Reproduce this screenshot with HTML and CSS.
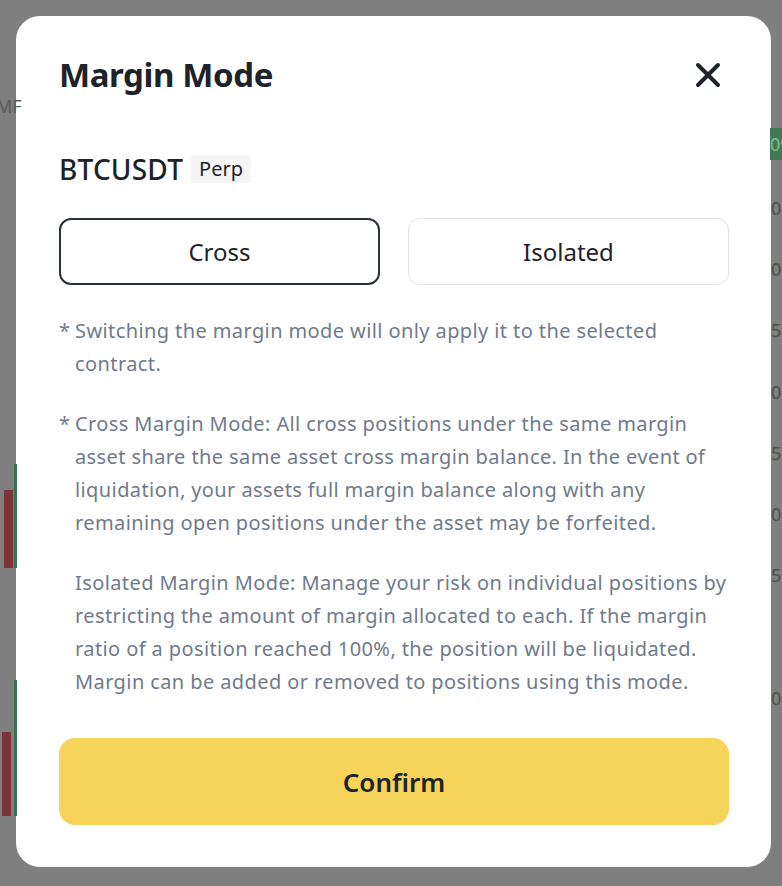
FILE: index.html
```html
<!DOCTYPE html>
<html lang="en">
<head>
<meta charset="utf-8">
<title>Margin Mode</title>
<link rel="stylesheet" href="styles.css">
</head>
<body>
<div class="backdrop">
  <div class="bg-label bg-mf">MF</div>
  <div class="bg-tag">09</div>
  <div class="bg-price" style="top:196px">05</div>
  <div class="bg-price" style="top:257px">00</div>
  <div class="bg-price" style="top:318px">50</div>
  <div class="bg-price" style="top:380px">00</div>
  <div class="bg-price" style="top:441px">50</div>
  <div class="bg-price" style="top:502px">00</div>
  <div class="bg-price" style="top:563px">50</div>
  <div class="bg-price" style="top:686px">00</div>
  <div class="bg-candle red" style="top:490px;height:78px;left:4px"></div>
  <div class="bg-candle green" style="top:464px;height:104px;left:14px"></div>
  <div class="bg-candle red" style="top:732px;height:84px;left:2px"></div>
  <div class="bg-candle green" style="top:680px;height:136px;left:14px"></div>

  <div class="modal">
    <div class="modal-header">
      <h1 class="modal-title">Margin Mode</h1>
      <button class="close-btn" aria-label="Close">
        <svg width="28" height="28" viewBox="0 0 28 28"><path d="M4 4 L24 24 M24 4 L4 24" stroke="#1e2329" stroke-width="4" stroke-linecap="round"/></svg>
      </button>
    </div>

    <div class="symbol-row">
      <span class="symbol">BTCUSDT</span>
      <span class="badge">Perp</span>
    </div>

    <div class="mode-options">
      <button class="mode-btn active">Cross</button>
      <button class="mode-btn">Isolated</button>
    </div>

    <div class="notes">
      <div class="note"><span class="star">*</span><p>Switching the margin mode will only apply it to the selected contract.</p></div>
      <div class="note"><span class="star">*</span><p>Cross Margin Mode: All cross positions under the same margin asset share the same asset cross margin balance. In the event of liquidation, your assets full margin balance along with any remaining open positions under the asset may be forfeited.</p></div>
      <div class="note"><span class="star"></span><p>Isolated Margin Mode: Manage your risk on individual positions by restricting the amount of margin allocated to each. If the margin ratio of a position reached 100%, the position will be liquidated. Margin can be added or removed to positions using this mode.</p></div>
    </div>

    <button class="confirm-btn">Confirm</button>
  </div>
</div>
</body>
</html>
```

FILE: styles.css
```css
* { box-sizing: border-box; }
html, body { margin: 0; padding: 0; }
body {
  width: 782px;
  height: 886px;
  overflow: hidden;
  font-family: "Noto Sans", "Liberation Sans", sans-serif;
  background: #7f7f7f;
}
.backdrop {
  position: relative;
  width: 782px;
  height: 886px;
  padding: 16px 11px 19px 16px;
  background: #7f7f7f;
}
.bg-label {
  position: absolute;
  left: -4px;
  top: 94px;
  color: #5a5a5a;
  font-size: 18px;
}
.bg-tag {
  position: absolute;
  right: 0;
  top: 128px;
  width: 12px;
  height: 32px;
  background: #3f7a55;
  color: #8ab79a;
  font-size: 18px;
  line-height: 32px;
  overflow: hidden;
}
.bg-price {
  position: absolute;
  right: -3px;
  width: 14px;
  color: #4d4d4d;
  font-size: 18px;
  overflow: hidden;
  white-space: nowrap;
}
.bg-candle {
  position: absolute;
  width: 9px;
}
.bg-candle.red { background: #7c3336; }
.bg-candle.green { background: #3c6e50; width: 3px; }

.modal {
  width: 755px;
  height: 851px;
  background: #ffffff;
  border-radius: 24px;
  padding: 40px 42px 42px 43px;
  display: flex;
  flex-direction: column;
}
.modal-header {
  display: flex;
  justify-content: space-between;
  align-items: center;
  height: 38px;
}
.modal-title {
  margin: 0;
  font-size: 33px;
  font-weight: 700;
  color: #1e2329;
  line-height: 38px;
  letter-spacing: -0.4px;
}
.close-btn {
  border: 0;
  background: none;
  padding: 0;
  margin-right: 7px;
  width: 28px;
  height: 28px;
  display: flex;
}
.symbol-row {
  display: flex;
  align-items: center;
  gap: 8px;
  margin-top: 59px;
  height: 32px;
}
.symbol {
  font-size: 28px;
  font-weight: 500;
  color: #1e2329;
  letter-spacing: 0.2px;
}
.badge {
  background: #f5f5f5;
  color: #1e2329;
  font-size: 20px;
  padding: 0 8px;
  height: 28px;
  line-height: 28px;
  border-radius: 3px;
}
.mode-options {
  display: grid;
  grid-template-columns: 1fr 1fr;
  gap: 28px;
  margin-top: 33px;
}
.mode-btn {
  height: 67px;
  background: #fff;
  border: 1px solid #e2e2e2;
  border-radius: 12px;
  font-family: inherit;
  font-size: 24px;
  color: #1e2329;
}
.mode-btn.active {
  border: 2px solid #2b3139;
}
.notes {
  margin-top: 29px;
  display: flex;
  flex-direction: column;
  gap: 27px;
}
.note {
  display: flex;
  font-size: 20px;
  line-height: 33px;
  letter-spacing: 0.4px;
  color: #707a8a;
}
.star {
  width: 16px;
  flex: none;
  letter-spacing: 0;
}
.note p {
  margin: 0;
}
.confirm-btn {
  margin-top: auto;
  height: 87px;
  border: 0;
  border-radius: 16px;
  background: #f6d45a;
  font-family: inherit;
  font-size: 26px;
  font-weight: 600;
  color: #1e2329;
}
```
